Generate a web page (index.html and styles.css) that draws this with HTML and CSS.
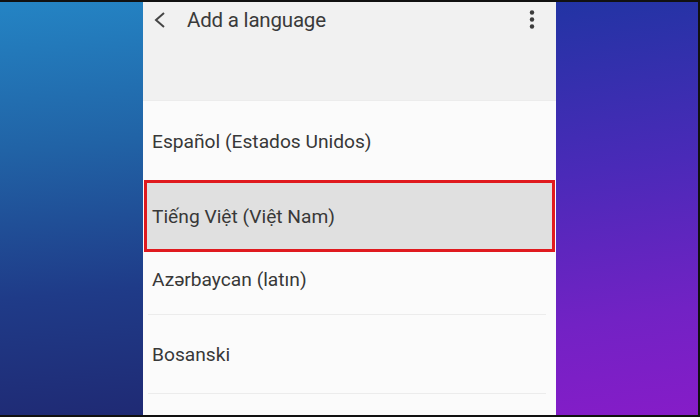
FILE: index.html
```html
<!DOCTYPE html>
<html lang="en">

<head>
  <meta charset="UTF-8">
  <meta name="viewport" content="width=device-width, initial-scale=1.0">
  <title>Add a language</title>
  <link rel="stylesheet" href="styles.css">
</head>

<body>
  <div class="frame">
    <div class="side side-left"></div>

    <div class="screen">
      <div class="app-bar">
        <div class="bar-row">
          <svg class="back" width="16" height="20" viewBox="0 0 16 20">
            <polyline points="12,3 4,10 12,17" fill="none" stroke="#454545" stroke-width="2" />
          </svg>
          <h1 class="title">Add a language</h1>
          <svg class="more" width="8" height="22" viewBox="0 0 8 22">
            <circle cx="4" cy="3.5" r="2.2" fill="#3c3c3c" />
            <circle cx="4" cy="10.5" r="2.2" fill="#3c3c3c" />
            <circle cx="4" cy="17.5" r="2.2" fill="#3c3c3c" />
          </svg>
        </div>
      </div>

      <ul class="language-list">
        <li class="language row-1">Español (Estados Unidos)</li>
        <li class="language row-2 selected">Tiếng Việt (Việt Nam)</li>
        <li class="language row-3">Azərbaycan (latın)</li>
        <li class="language row-4">Bosanski</li>
        <li class="language row-5"></li>
      </ul>
    </div>

    <div class="side side-right"></div>
  </div>
</body>

</html>
```

FILE: styles.css
```css
/* phone screenshot framed by gradient side panels */
html,
body {
  margin: 0;
  padding: 0;
}

body {
  width: 700px;
  height: 417px;
  overflow: hidden;
  background: #111;
  font-family: Roboto, "Noto Sans", sans-serif;
}

.frame {
  display: flex;
  height: 413px;
  margin-top: 2px;
  box-sizing: border-box;
  border-right: 2px solid #111;
}

.side {
  flex: none;
}

.side-left {
  width: 143px;
  background: linear-gradient(175deg, #2484c4 0%, #2163a6 35%, #1f3b88 70%, #1f2a74 100%);
}

.side-right {
  flex: 1;
  background: linear-gradient(172deg, #2234a4 0%, #4a2ab8 40%, #7222c4 75%, #861cc8 100%);
}

.screen {
  width: 413px;
  flex: none;
  display: flex;
  flex-direction: column;
  background: #fbfbfb;
}

.app-bar {
  height: 98px;
  background: #f1f1f1;
  border-bottom: 1px solid #ececec;
}

.bar-row {
  display: flex;
  align-items: center;
  height: 36px;
  padding: 0 20px 0 9px;
}

.back {
  margin-right: 19px;
}

.title {
  flex: 1;
  margin: 0;
  font-size: 20.5px;
  font-weight: normal;
  color: #3a3a3a;
  letter-spacing: -0.2px;
}

.language-list {
  list-style: none;
  margin: 0;
  padding: 0;
}

.language {
  display: flex;
  align-items: center;
  padding-left: 9px;
  font-size: 19.2px;
  color: #383838;
  box-sizing: border-box;
}

.row-1 {
  height: 79px;
  padding-top: 2px;
}

.row-2 {
  height: 72px;
}

.row-3 {
  height: 63px;
  padding-bottom: 8px;
  border-bottom: 1px solid #ececec;
}

.row-4 {
  height: 79px;
  border-bottom: 1px solid #ececec;
}

.row-5 {
  height: 20px;
}

.row-3,
.row-4 {
  margin: 0 10px 0 5px;
  padding-left: 4px;
}

.selected {
  margin-left: 1px;
  margin-right: 1px;
  background: #e0e0e0;
  border: 3px solid #e01a1f;
  padding-left: 5px;
}
```
